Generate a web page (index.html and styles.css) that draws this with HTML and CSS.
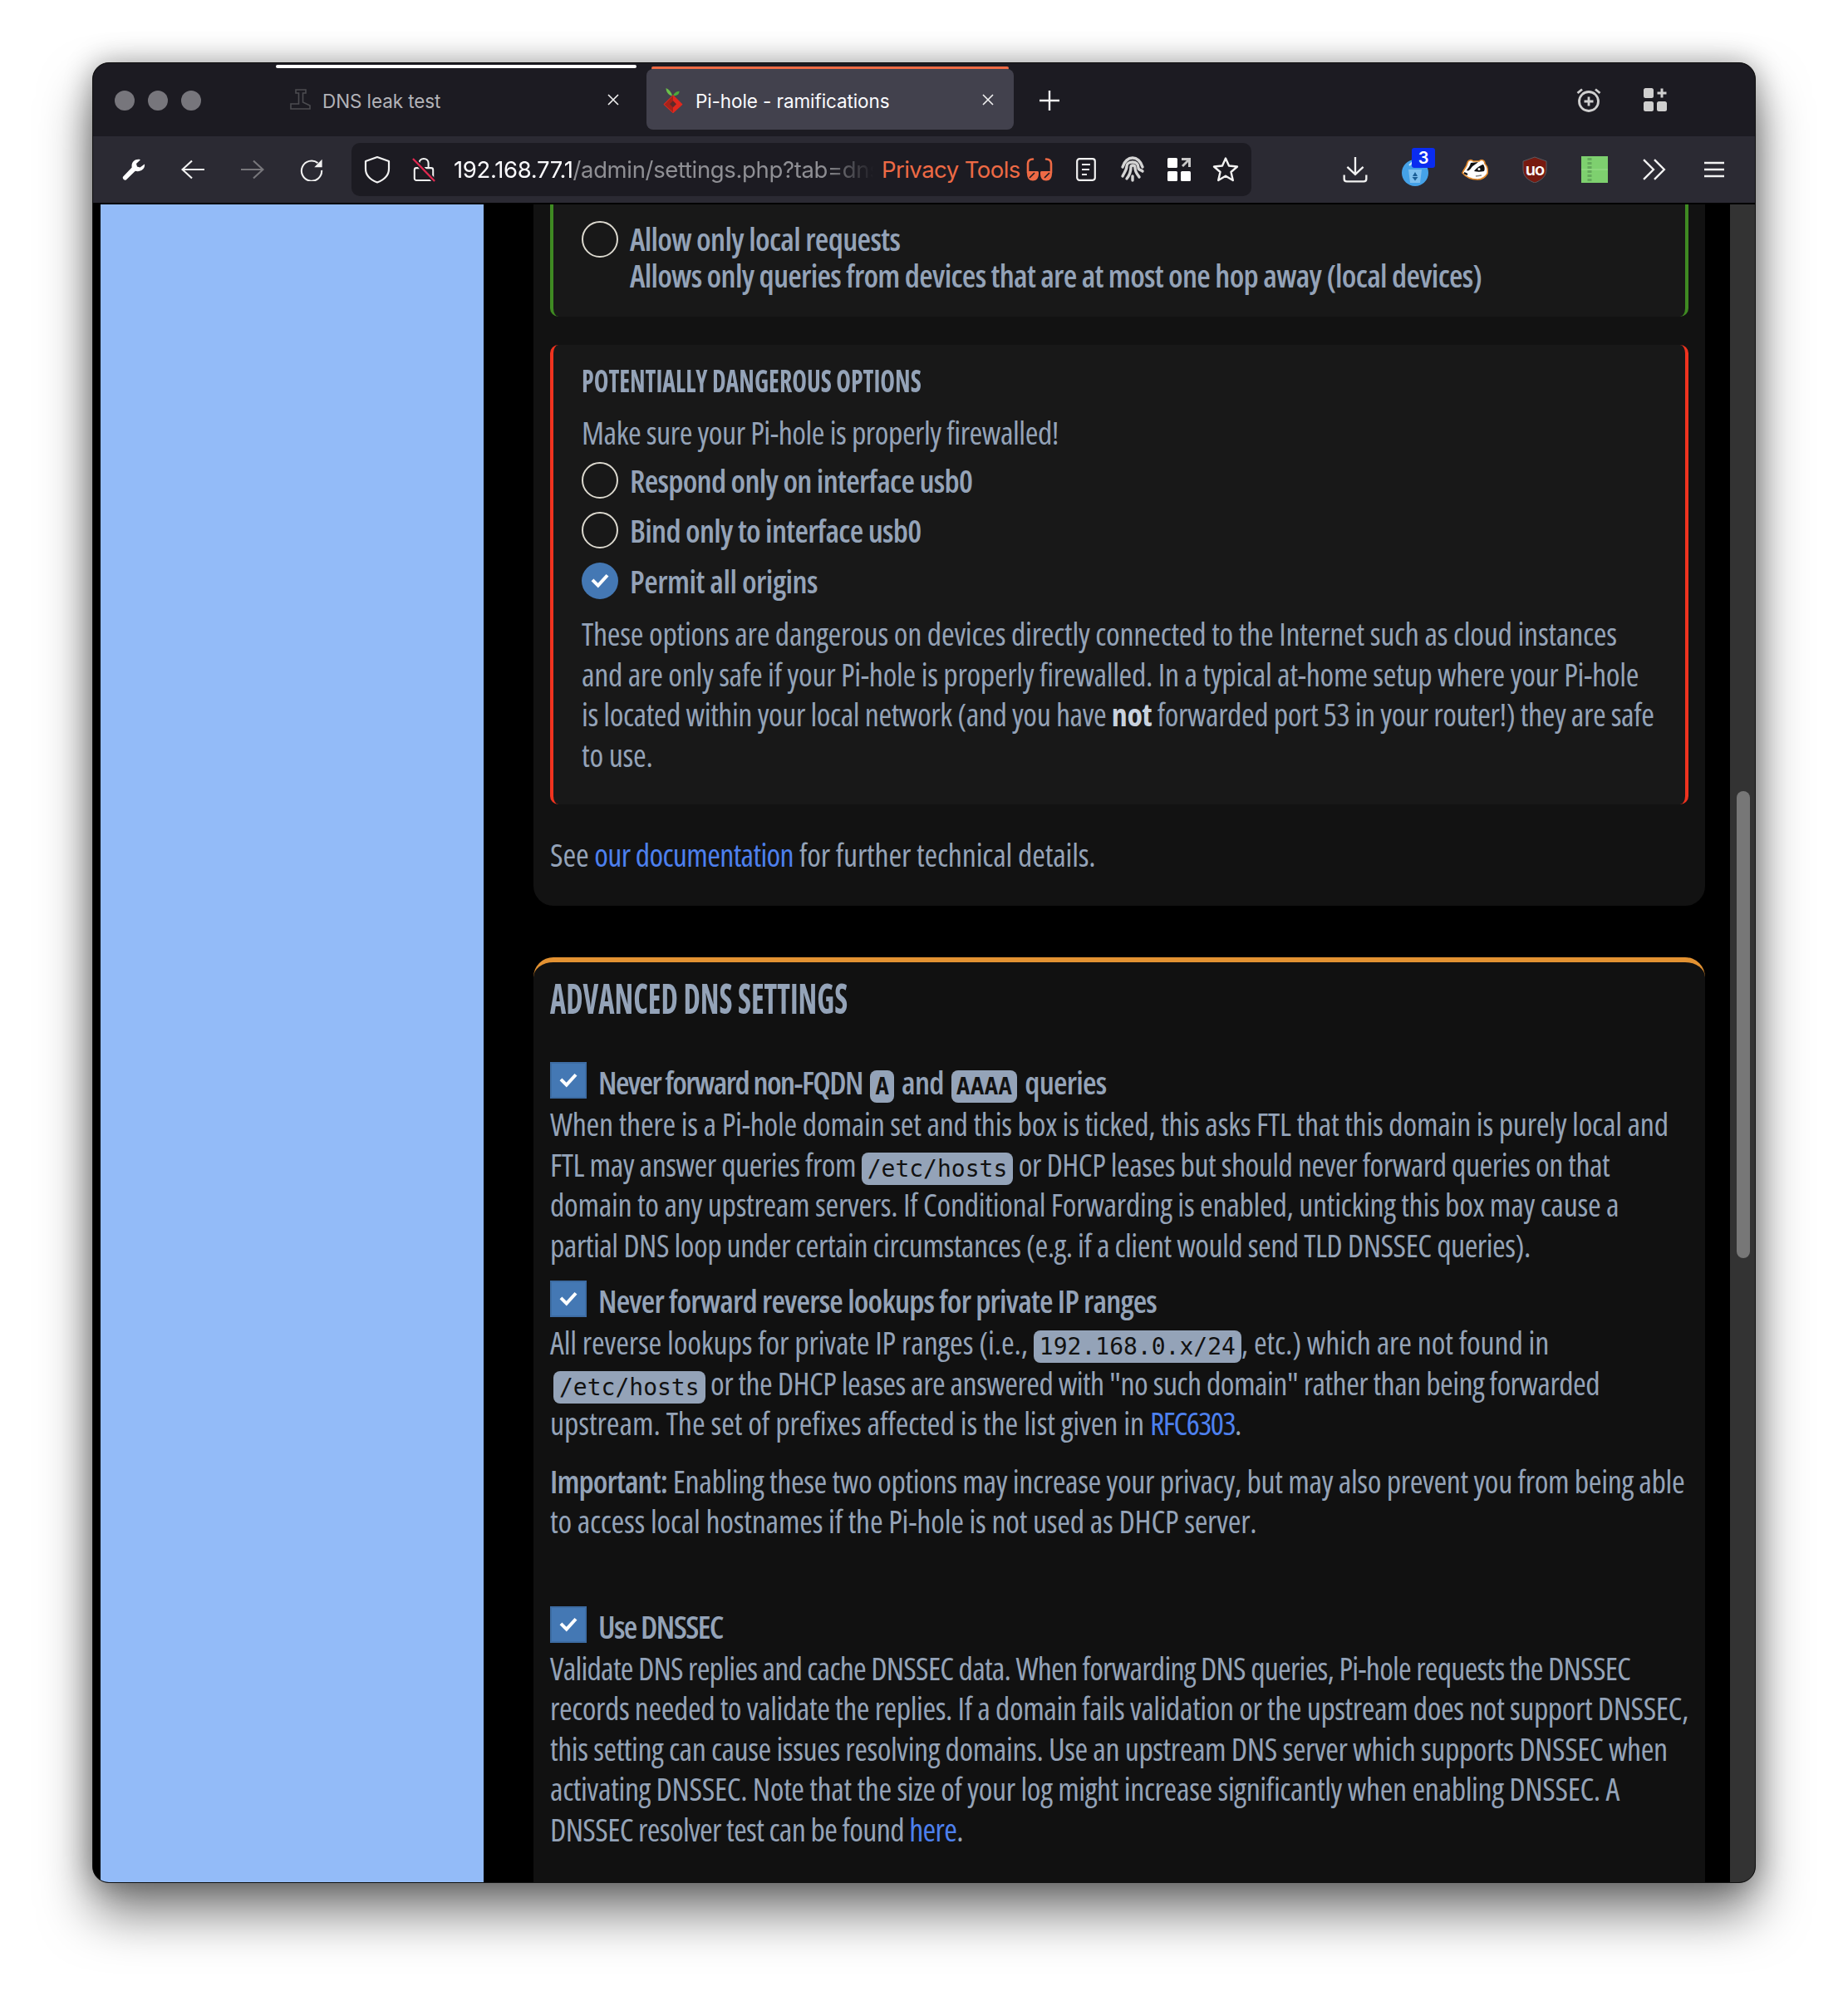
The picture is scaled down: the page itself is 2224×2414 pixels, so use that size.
FILE: index.html
```html
<!DOCTYPE html>
<html lang="en">
<head>
<meta charset="utf-8">
<title>Pi-hole - ramifications</title>
<link rel="stylesheet" href="styles.css">
</head>
<body>
<div class="window">
  <header class="tabstrip">
    <div class="dots"><i class="dot"></i><i class="dot"></i><i class="dot"></i></div>
    <div class="tab">
      <div class="tab-bar"></div>
      <div class="tab-body">
        <svg class="tab-icon" viewBox="0 0 28 28" fill="none" stroke="#4c4c50" stroke-width="1.6"><path d="M8 2H20V6H16.5V17L25 21V25H2V19H11.5V6H8Z"/></svg>
        <span class="tab-title">DNS leak test</span>
        <svg class="tab-close" viewBox="0 0 14 14" stroke="#f2f2f2" stroke-width="1.6"><path d="M1 1L13 13M13 1L1 13"/></svg>
      </div>
    </div>
    <div class="tab tab-active">
      <div class="tab-bar"></div>
      <div class="tab-body">
        <svg class="tab-icon" viewBox="0 0 28 34" fill="none"><path d="M13 12C12 7 9 4 5 2C5 7 8 11 13 12Z" fill="#6cc04a"/><path d="M14 12C15 9 18 6 22 6C22 10 19 12 14 12Z" fill="#4ea83a"/><path d="M14 12L25 23L14 33L3 23Z" fill="#e0281e" stroke="#e0281e" stroke-width="2" stroke-linejoin="round"/><path d="M14 12L3 23L14 33Z" fill="#a5231a"/><rect x="11" y="19.500" width="6" height="6" fill="#5c2a2a" transform="rotate(45 14 22.500)"/></svg>
        <span class="tab-title">Pi-hole - ramifications</span>
        <svg class="tab-close" viewBox="0 0 14 14" stroke="#f2f2f2" stroke-width="1.6"><path d="M1 1L13 13M13 1L1 13"/></svg>
      </div>
    </div>
    <svg class="new-tab" viewBox="0 0 24 24" stroke="#f2f2f2" stroke-width="2.4"><path d="M12 0V24M0 12H24"/></svg>
    <div class="strip-right">
      <svg class="strip-icon" viewBox="0 0 30 30" fill="none" stroke="#cfcfcf" stroke-width="2.8"><circle cx="15" cy="17" r="11.5"/><path d="M15 11.5V22.5M9.5 17H20.5M1.5 7L7 2.5M28.5 7L23 2.5"/></svg>
      <svg class="strip-icon" viewBox="0 0 30 30" fill="#cfcfcf"><rect x="1" y="1" width="12" height="12" rx="2.5"/><rect x="1" y="17" width="12" height="12" rx="2.5"/><rect x="17" y="17" width="12" height="12" rx="2.5"/><path d="M21.5 1.5H24.5V5.5H28.5V8.5H24.5V12.5H21.5V8.5H17.5V5.5H21.5Z"/></svg>
    </div>
  </header>

  <nav class="toolbar">
    <span class="tool"><svg class="ic28" viewBox="0 0 28 28" fill="#fff"><path d="M27 7.5L21.5 11.5L18 10.5L17 7L22 2.2C16 .5 10.5 5 11.7 11.5L1.2 22.5C-.6 24.6 3 28.2 5 26.3L15.8 15.8C22 17.3 28 13.5 27 7.5Z"/></svg></span>
    <span class="tool"><svg class="ic28" viewBox="0 0 28 24" fill="none" stroke="#f2f2f2" stroke-width="2.2"><path d="M28 12H2M13 1.5L1.5 12L13 22.5"/></svg></span>
    <span class="tool"><svg class="ic28" viewBox="0 0 28 24" fill="none" stroke="#77767b" stroke-width="2.2"><path d="M0 12H26M15 1.5L26.5 12L15 22.5"/></svg></span>
    <span class="tool"><svg class="ic28" viewBox="0 0 30 30" fill="none" stroke="#f2f2f2" stroke-width="2.2"><path d="M23 6.5A13 13 0 1 0 28 16"/><path d="M28.5 2V12H18.5Z" fill="#f2f2f2" stroke="none"/></svg></span>
    <div class="urlbar">
      <svg class="shield" viewBox="0 0 32 34" fill="none" stroke="#f2f2f2" stroke-width="2.2" stroke-linejoin="round"><path d="M16 2L30 7V16C30 24 24 29.500 16 32.500C8 29.500 2 24 2 16V7Z"/></svg>
      <svg class="lock" viewBox="0 0 30 32" fill="none"><path d="M9 14V8C9 4.500 11.500 2 15 2S21 4.500 21 8V14" stroke="#f2f2f2" stroke-width="2.2"/><rect x="3" y="14" width="24" height="16" rx="2.500" stroke="#f2f2f2" stroke-width="2.2"/><path d="M1 2L29 31" stroke="#1c1b22" stroke-width="6"/><path d="M1 2L29 31" stroke="#e22850" stroke-width="2.4"/></svg>
      <span class="url"><b class="host">192.168.77.1</b>/admin/settings.php?tab=dns</span>
      <span class="privacy">Privacy Tools</span>
      <svg class="glasses" viewBox="0 0 32 28" fill="#ee6a45"><path d="M2 18V7C2 3.500 4 1.500 8 1.500M30 18V7C30 3.500 28 1.500 24 1.500" fill="none" stroke="#ee6a45" stroke-width="2.6" stroke-linecap="round"/><path d="M1 16H13.500C15 16 15 17 15 19C15 24 12.500 27.500 8 27.500S1 24 1 19ZM31 16H18.500C17 16 17 17 17 19C17 24 19.500 27.500 24 27.500S31 24 31 19Z"/><path d="M4 24L10 18M22 24L28 18" stroke="#1c1b22" stroke-width="1.6"/></svg>
      <span class="url-icon"><svg class="ic28" viewBox="0 0 24 28" fill="none" stroke="#f2f2f2" stroke-width="2.2"><rect x="1.200" y="1.200" width="21.600" height="25.600" rx="3"/><path d="M7 8H17M7 14H16M7 20H13"/></svg></span>
      <span class="url-icon"><svg class="ic30" viewBox="0 0 30 32" fill="none" stroke="#d4d4d4" stroke-width="3.400" stroke-linecap="round"><path d="M3 13C5 6 10 2 15 2S25 6 27 13"/><path d="M3 24C6 18 8 16 8 12C8 9 11 7 15 7S22 9.500 22 14C22 17 25 16 27 18"/><path d="M8 27C12 22 13 18 13 13C13 11.500 14 11 15.500 11S18 12 18 14C18 19 21 22 23 25"/><path d="M15 29V24"/></svg></span>
      <span class="url-icon"><svg class="ic28" viewBox="0 0 28 28" fill="#fff"><rect width="12" height="12" rx="1.500"/><rect y="16" width="12" height="12" rx="1.500"/><rect x="16" y="16" width="12" height="12" rx="1.500"/><path d="M17 0H28V11H25V5L19 11L17 9L23 3H17Z" fill="#c8c8c8"/></svg></span>
      <span class="url-icon"><svg class="ic32" viewBox="0 0 32 32" fill="none" stroke="#f2f2f2" stroke-width="2.400" stroke-linejoin="round"><path d="M16 2.500L20 11.500L30 12.500L22.500 19L24.800 29L16 23.800L7.200 29L9.500 19L2 12.500L12 11.500Z"/></svg></span>
    </div>
    <div class="tools-right">
      <span class="tool"><svg class="ic30" viewBox="0 0 28 30" fill="none" stroke="#f2f2f2" stroke-width="2.200"><path d="M14 1V20M5 12L14 20.500L23 12M1.500 21V25.500C1.500 27.500 2.500 28.500 4.500 28.500H23.500C25.500 28.500 26.500 27.500 26.500 25.500V21"/></svg></span>
      <span class="tool tool-badge">
        <svg class="ic32" viewBox="0 0 32 32"><circle cx="16" cy="16" r="16" fill="#45a2e8"/><path d="M8 12H24L22 28H10Z" fill="#7fc0ef"/><path d="M16 15L19 20H13ZM12.500 21H19.500L16 25.500Z" fill="#1c5f98"/><path d="M9 7L15 1" stroke="#cfe8fb" stroke-width="2"/></svg>
        <span class="badge">3</span>
      </span>
      <span class="tool"><svg class="ic32" viewBox="0 0 32 26"><path d="M1 17C3 12 6 10 7 5C8 1 12 1 14 3H21C24 0 28 2 28 6C31 9 32 13 31 18C28 23 24 25 19 25C12 25 6 23 1 17Z" fill="#fff" stroke="#e28a2c" stroke-width="1.600"/><path d="M6 14C8 11 10 9 11 5L20 4C17 7 13 8 11 12C9 14 8 15 6 14Z" fill="#111"/><path d="M15 15C18 11 22 8 26 7C28 10 28 13 27 15C23 16 19 16 15 15Z" fill="#111"/><circle cx="21" cy="12.500" r="1.500" fill="#fff"/><path d="M3 17L7 19" stroke="#111" stroke-width="2"/><path d="M17 21L24 20" stroke="#888" stroke-width="1.500"/></svg></span>
      <span class="tool"><span class="ublock"><svg class="ic30" viewBox="0 0 30 32"><path d="M15 1L29 6V16C29 24 23 29 15 32C7 29 1 24 1 16V6Z" fill="#771a10" stroke="#5a5a60" stroke-width="1"/></svg><b class="ublock-text">uo</b></span></span>
      <span class="tool"><svg class="ic32" viewBox="0 0 32 32"><rect width="32" height="32" fill="#7ed06f"/><path d="M0 16H32" stroke="#9adf8c" stroke-width="1"/><path d="M10 2V30" stroke="#64a95b" stroke-width="5" stroke-dasharray="3 2"/></svg></span>
      <span class="tool"><svg class="ic28" viewBox="0 0 26 24" fill="none" stroke="#f2f2f2" stroke-width="2.200"><path d="M1 1L12 12L1 23M13 1L24 12L13 23"/></svg></span>
      <span class="tool"><svg class="ic24" viewBox="0 0 24 20" stroke="#f2f2f2" stroke-width="2.400"><path d="M0 2H24M0 10H24M0 18H24"/></svg></span>
    </div>
  </nav>

  <div class="page">
    <aside class="sidebar"></aside>
    <main class="main">
      <section class="card card-first">
        <div class="box box-green">
          <div class="option">
            <span class="radio"></span>
            <div class="option-text"><strong class="k70">Allow only local requests</strong><br><strong class="k74">Allows only queries from devices that are at most one hop away (local devices)</strong></div>
          </div>
        </div>
        <div class="box box-red">
          <h4 class="box-title">POTENTIALLY DANGEROUS OPTIONS</h4>
          <p class="copy make-sure k48">Make sure your Pi-hole is properly firewalled!</p>
          <div class="choices">
            <div class="choice"><span class="radio"></span><strong class="k74">Respond only on interface usb0</strong></div>
            <div class="choice"><span class="radio"></span><strong class="k74">Bind only to interface usb0</strong></div>
            <div class="choice"><span class="radio radio-on"><svg viewBox="0 0 20 16" fill="none" stroke="#fff" stroke-width="3.600"><path d="M2 7L8 13L18 2"/></svg></span><strong class="k50">Permit all origins</strong></div>
          </div>
          <p class="copy warn"><span class="k27">These options are dangerous on devices directly connected to the Internet such as cloud instances</span><br><span class="k33">and are only safe if your Pi-hole is properly firewalled. In a typical at-home setup where your Pi-hole</span><br><span class="k46">is located within your local network (and you have <b class="em">not</b> forwarded port 53 in your router!) they are safe</span><br>to use.</p>
        </div>
        <p class="copy see k20">See <a class="link k70" href="#">our documentation</a> for further technical details.</p>
      </section>

      <section class="card card-orange">
        <h3 class="card-title">ADVANCED DNS SETTINGS</h3>
        <div class="check check-1"><span class="tick"><svg viewBox="0 0 20 16" fill="none" stroke="#fff" stroke-width="3.600"><path d="M2 7L8 13L18 2"/></svg></span><strong><span class="k160">Never forward non-FQDN</span> <kbd class="pill pill-bold">A</kbd> and <kbd class="pill pill-bold">AAAA</kbd> queries</strong></div>
        <p class="copy under"><span class="k27">When there is a Pi-hole domain set and this box is ticked, this asks FTL that this domain is purely local and</span><br><span class="k52">FTL may answer queries from <code class="pill">/etc/hosts</code> or DHCP leases but should never forward queries on that</span><br><span class="k33">domain to any upstream servers. If Conditional Forwarding is enabled, unticking this box may cause a</span><br><span class="k52">partial DNS loop under certain circumstances (e.g. if a client would send TLD DNSSEC queries).</span></p>
        <div class="check check-2"><span class="tick"><svg viewBox="0 0 20 16" fill="none" stroke="#fff" stroke-width="3.600"><path d="M2 7L8 13L18 2"/></svg></span><strong class="k85">Never forward reverse lookups for private IP ranges</strong></div>
        <p class="copy under"><span class="k16">All reverse lookups for private IP ranges (i.e., <code class="pill">192.168.0.x/24</code>, etc.) which are not found in</span><br><span class="k58"><code class="pill pill-start">/etc/hosts</code> or the DHCP leases are answered with "no such domain" rather than being forwarded</span><br><span class="k10">upstream. The set of prefixes affected is the list given in <a class="link k160" href="#">RFC6303</a>.</span></p>
        <p class="copy important"><span class="k39"><b class="strong">Important:</b> Enabling these two options may increase your privacy, but may also prevent you from being able</span><br>to access local hostnames if the Pi-hole is not used as DHCP server.</p>
        <div class="check check-3"><span class="tick"><svg viewBox="0 0 20 16" fill="none" stroke="#fff" stroke-width="3.600"><path d="M2 7L8 13L18 2"/></svg></span><strong class="k160">Use DNSSEC</strong></div>
        <p class="copy under"><span class="k80">Validate DNS replies and cache DNSSEC data. When forwarding DNS queries, Pi-hole requests the DNSSEC</span><br><span class="k46">records needed to validate the replies. If a domain fails validation or the upstream does not support DNSSEC,</span><br><span class="k46">this setting can cause issues resolving domains. Use an upstream DNS server which supports DNSSEC when</span><br><span class="k39">activating DNSSEC. Note that the size of your log might increase significantly when enabling DNSSEC. A</span><br><span class="k70">DNSSEC resolver test can be found <a class="link" href="#">here</a>.</span></p>
      </section>
    </main>
    <div class="scrollbar"><div class="thumb"></div></div>
  </div>
</div>
</body>
</html>
```
FILE: styles.css
```css
* { box-sizing: border-box; }
html, body { margin: 0; background: #fff; }
body { padding: 75px 111px 148px; font-family: Inter, "Liberation Sans", sans-serif; height: 2414px; overflow: hidden; }

.window {
  width: 2002px; height: 2191px; background: #000; border-radius: 20px; overflow: hidden;
  display: flex; flex-direction: column;
  border: 1px solid #111;
  box-shadow: 0 36px 62px rgba(0,0,0,.52), 0 0 34px rgba(0,0,0,.32);
}

/* tab strip */
.tabstrip { height: 88px; background: #1c1b22; display: flex; align-items: flex-start; padding-left: 26px; flex: none; }
.dots { display: flex; gap: 16px; margin-top: 33px; width: 194px; }
.dot { width: 24px; height: 24px; border-radius: 50%; background: #77767c; }
.tab { width: 434px; margin-top: 2px; }
.tab-bar { height: 4px; background: #fff; border-radius: 2px; }
.tab-body { height: 74px; display: flex; align-items: center; padding: 0 20px 0 16px; margin-top: 1px; }
.tab-icon { width: 28px; height: 32px; flex: none; }
.tab-title { margin-left: 12px; font-size: 22.500px; color: #b3b3b8; flex: 1; letter-spacing: -.1px; padding-top: 3px; }
.tab-close { width: 14px; height: 14px; flex: none; margin-right: 1px; }
.tab-active { width: 442px; margin-left: 12px; margin-top: 4px; }
.tab-active .tab-bar { background: #ee6a45; margin: 0 6px; }
.tab-active .tab-body { background: #42414d; border-radius: 8px; height: 73px; margin-top: -1px; padding: 0 23px 0 18px; }
.tab-active .tab-title { color: #fbfbfe; margin-left: 13px; }
.new-tab { width: 24px; height: 24px; margin: 33px 0 0 31px; flex: none; }
.strip-right { margin-left: auto; display: flex; gap: 50px; margin-top: 29px; padding-right: 105px; }
.strip-icon { width: 30px; height: 30px; }

/* toolbar */
.toolbar { height: 80px; background: #2b2a33; display: flex; align-items: center; padding: 0 13px; flex: none; }
.tool { width: 72px; height: 40px; display: flex; align-items: center; justify-content: center; flex: none; position: relative; }
.toolbar > .tool { width: 71.500px; }
.ic24 { width: 24px; height: 20px; }
.ic28 { width: 28px; height: 28px; }
.ic30 { width: 30px; height: 32px; }
.ic32 { width: 32px; height: 32px; }
.urlbar { width: 1083px; height: 64px; margin-left: 12px; background: #1c1b22; border-radius: 10px; display: flex; align-items: center; padding-left: 15px; }
.shield { width: 32px; height: 34px; flex: none; }
.lock { width: 28px; height: 30px; flex: none; margin-left: 26px; }
.url { margin-left: 22px; width: 506px; overflow: hidden; white-space: nowrap; font-size: 27.500px; color: #8f8f94; flex: none; letter-spacing: -.35px; -webkit-mask-image: linear-gradient(90deg, #000 88%, transparent 100%); mask-image: linear-gradient(90deg, #000 88%, transparent 100%); }
.host { color: #fbfbfe; font-weight: 400; }
.privacy { margin-left: 9px; font-size: 27.500px; color: #ee6a45; white-space: nowrap; flex: none; letter-spacing: -.55px; }
.glasses { width: 32px; height: 28px; margin-left: 7px; flex: none; }
.url-icon { width: 56px; display: flex; justify-content: center; flex: none; }
.glasses + .url-icon { margin-left: 12px; }
.tools-right { display: flex; margin-left: auto; }
.tool-badge svg { margin-top: 8px; }
.badge { position: absolute; left: 32px; top: -6px; width: 28px; height: 24px; background: #0a2cf0; color: #fff; border-radius: 3px; font-size: 20px; font-weight: 600; display: flex; align-items: center; justify-content: center; }
.ublock { position: relative; display: flex; }
.ublock-text { position: absolute; inset: 4px 0 0; text-align: center; color: #fff; font-size: 20px; font-weight: 600; letter-spacing: -1px; }

/* page */
.page { flex: 1; display: flex; padding: 2px 0 0 9px; background: #000; min-height: 0; }
.sidebar { width: 461px; background: #93bbf8; flex: none; }
.main { width: 1500px; padding: 0 30px 0 60px; overflow: hidden; flex: none; }
.scrollbar { width: 31px; background: #333; padding: 706px 7px 0 8px; flex: none; }
.thumb { height: 562px; background: #777; border-radius: 8px; }

/* cards */
.card { background: #121212; padding: 0 20px; color: #94a3b8; font-family: "Open Sans", "Liberation Sans", sans-serif; font-stretch: 75%; font-size: 38px; white-space: nowrap; }
strong { font-weight: 600; letter-spacing: -.8px; }
.card-first { height: 844px; border-radius: 0 0 24px 24px; }
.card-orange { margin-top: 62px; min-height: 1200px; background: #111; border-top: 6px solid #e39232; border-radius: 24px 24px 0 0; padding-top: 13px; }
.card-title { margin: 0; font-size: 50px; line-height: 60px; font-weight: 700; transform: scaleX(.73); transform-origin: left center; }
.box { background: #181818; border-left: 4px solid; border-right: 4px solid; padding-left: 34px; border-radius: 10px; }
.box-green { height: 135px; border-color: #3f8a22; border-radius: 0 0 10px 10px; padding-top: 19px; }
.box-red { margin-top: 34px; height: 553px; border-color: #f0331f; padding-top: 20px; }
.box-title { margin: 0; font-size: 38px; line-height: 44px; font-weight: 700; transform: scaleX(.787); transform-origin: left center; }
.option { display: flex; gap: 14px; line-height: 44px; }
.option .radio { margin-top: 1px; }
.option-text { min-width: 0; }
.radio { width: 44px; height: 44px; border-radius: 50%; border: 2px solid #dcd9cf; flex: none; display: flex; align-items: center; justify-content: center; }
.radio-on { background: #4478b4; border: 0; }
.radio svg, .tick svg { width: 24px; height: 18px; }
.copy { margin: 0; line-height: 48.500px; font-weight: 500; letter-spacing: -.25px; }
.make-sure { margin-top: 17px; }
.choices { margin-top: 3px; }
.choice { display: flex; align-items: center; gap: 14px; height: 60.500px; }
.warn { margin-top: 9px; }
.em { color: #c9d2de; font-weight: 700; }
.strong { font-weight: 600; letter-spacing: -.9px; }
.see { margin-top: 36px; }
.link { color: #4d80ee; text-decoration: none; }
.check { display: flex; align-items: center; gap: 14px; height: 44px; }
.check strong { line-height: 44px; position: relative; top: 2px; }
.check-1 { margin-top: 47px; }
.check-2 { margin-top: 19px; }
.check-3 { margin-top: 78px; }
.tick { width: 44px; height: 44px; background: #4478b4; border: 2px solid #3d6ca3; display: flex; align-items: center; justify-content: center; flex: none; }
.under { margin-top: 6px; }
.important { margin-top: 21px; }
.pill { font-family: "DejaVu Sans Mono", "Liberation Mono", monospace; font-stretch: 100%; font-size: 28px; font-weight: 400; letter-spacing: 0; background: #94a3b8; color: #111; border-radius: 8px; padding: 3px 7px; line-height: 1; }
.pill-bold { font-weight: 700; padding: 3px 6px; margin: 0 3px; }
.pill-start { margin-left: 4px; }

/* per-line tracking, to keep the reference's line lengths */
.k10 { letter-spacing: -.10px; }
.k16 { letter-spacing: -.16px; }
.k20 { letter-spacing: -.20px; }
.k27 { letter-spacing: -.27px; }
.k33 { letter-spacing: -.33px; }
.k39 { letter-spacing: -.39px; }
.k46 { letter-spacing: -.46px; }
.k48 { letter-spacing: -.48px; }
.k50 { letter-spacing: -.50px; }
.k52 { letter-spacing: -.52px; }
.k58 { letter-spacing: -.58px; }
.k70 { letter-spacing: -.70px; }
.k74 { letter-spacing: -.74px; }
.k80 { letter-spacing: -.80px; }
.k85 { letter-spacing: -.85px; }
.k160 { letter-spacing: -1.600px; }
.pill.pill { letter-spacing: 0; }
```
